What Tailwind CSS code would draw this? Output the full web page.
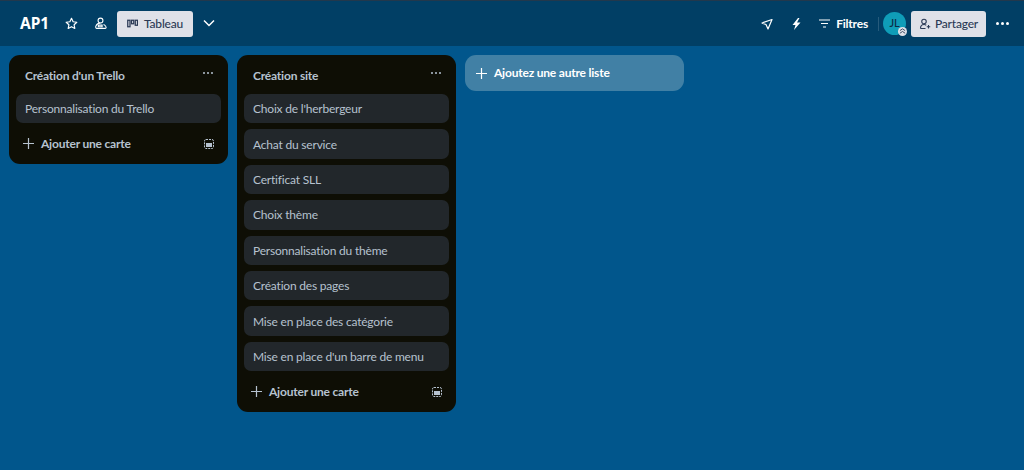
<!doctype html>
<html lang="fr"><head><meta charset="utf-8"><title>AP1</title>
<script src="https://cdn.jsdelivr.net/npm/@tailwindcss/browser@4"></script></head>
<body class="m-0">
<div class="w-[1024px] h-[470px] overflow-hidden flex flex-col bg-[#01568c] font-['Lato',sans-serif] text-[12px] tracking-[-0.2px]">
  <header class="h-[46px] shrink-0 bg-[#013f65] border-t border-[#22384c] flex items-center text-white">
    <span class="ml-[20px] text-[15.500px] font-bold w-[27px] tracking-normal font-['Noto_Sans',sans-serif]">AP1</span>
    <svg class="ml-[18px]" width="13" height="13" viewBox="0 0 24 24" fill="none" stroke="#fff" stroke-width="2.200" stroke-linejoin="round"><path d="M12 2.500l3 6.300 6.800.9-5 4.700 1.300 6.800-6.100-3.300-6.100 3.300 1.300-6.800-5-4.700 6.800-.9z"/></svg>
    <svg class="ml-[16px]" width="13" height="13" viewBox="0 0 24 24" fill="none" stroke="#fff" stroke-width="2"><circle cx="12" cy="6.500" r="4.500"/><path d="M4 21h17c1.500 0 2-2 .5-4-1-1.500-2.500-2.500-4-3M12 11c-4 0-7 2-8.500 5.500-1 2 0 4.500 1.500 4.500M8 15h7v3H8z"/></svg>
    <div class="ml-[10px] w-[76px] h-[26px] rounded-[3px] bg-[#dfe1e8] flex items-center justify-center gap-[6px] text-[#2b3a55] font-medium">
      <svg width="11" height="9" viewBox="0 0 22 16" fill="none" stroke="#2b3a55" stroke-width="2.500"><rect x="1.500" y="1.500" width="4.500" height="13"/><rect x="9" y="1.500" width="4.500" height="7"/><rect x="16.500" y="1.500" width="4.500" height="10"/></svg>
      <span class="pt-[1px]">Tableau</span>
    </div>
    <svg class="ml-[9px]" width="14" height="9" viewBox="0 0 14 9" fill="none" stroke="#fff" stroke-width="1.500"><path d="M2 1.500l5 5 5-5"/></svg>
    <div class="ml-auto flex items-center">
      <svg width="12" height="12" viewBox="0 0 24 24" fill="none" stroke="#fff" stroke-width="2.400" stroke-linejoin="round"><path d="M22 3L2 10l8 3 4 9z"/></svg>
      <svg class="ml-[18px]" width="11" height="12" viewBox="0 0 20 24" fill="#fff"><path d="M13 0L2 14h6l-3 10 13-15h-7l5-9z"/></svg>
      <svg class="ml-[17px]" width="11" height="9" viewBox="0 0 11 9" fill="none" stroke="#fff" stroke-width="1.200"><path d="M0 1h11M2 4.500h7M4 8h3"/></svg>
      <span class="ml-[6px] pt-[1px] font-bold">Filtres</span>
      <div class="ml-[10px] w-px h-[14px] bg-white/15"></div>
      <div class="relative ml-[4px] w-[23px] h-[23px] rounded-full bg-[#0f9db8] flex items-center justify-center text-[11px] font-medium text-[#0b2a44]">JL
        <div class="absolute right-[-1px] bottom-[-1px] w-[9px] h-[9px] rounded-full bg-[#dfe1e8] flex items-center justify-center"><svg width="7" height="7" viewBox="0 0 8 8" fill="none" stroke="#2b3a55" stroke-width="1"><path d="M1 3l3-2 3 2M1 6l3-2 3 2"/></svg></div>
      </div>
      <div class="ml-[5px] w-[75px] h-[26px] rounded-[3px] bg-[#dfe1e8] flex items-center justify-center gap-[4px] text-[#2b3a55] font-medium">
        <svg width="12" height="12" viewBox="0 0 24 24" fill="none" stroke="#2b3a55" stroke-width="2.200"><circle cx="10" cy="7" r="4.500"/><path d="M3 21c0-5 3-8 7-8 2 0 3.500.6 4.500 1.500M3 21h10M19 14v7M15.500 17.500h7"/></svg>
        <span class="pt-[1px]">Partager</span>
      </div>
      <div class="ml-[10px] mr-[15px] flex gap-[2px]"><i class="block w-[3px] h-[3px] rounded-full bg-white"></i><i class="block w-[3px] h-[3px] rounded-full bg-white"></i><i class="block w-[3px] h-[3px] rounded-full bg-white"></i></div>
    </div>
  </header>
  <main class="flex items-start gap-[9px] pl-[9px] pt-[9px]">
    <section class="w-[219px] rounded-[11px] bg-[#0e0e05] px-[7px] text-[#b6c2cf]">
      <div class="h-[39px] flex items-center justify-between pl-[9px] pr-[7px] font-bold"><span class="pt-[2px]">Création d'un Trello</span><div class="mb-[3px] mr-[1px] flex gap-[1.500px]"><i class="block w-[2.500px] h-[2.500px] rounded-full bg-[#b6c2cf]"></i><i class="block w-[2.500px] h-[2.500px] rounded-full bg-[#b6c2cf]"></i><i class="block w-[2.500px] h-[2.500px] rounded-full bg-[#b6c2cf]"></i></div></div>
      <div class="flex flex-col gap-[6px]">
        <div class="h-[29.400px] rounded-[7px] bg-[#22272b] pl-[9px] pt-[1px] flex items-center">Personnalisation du Trello</div>
      </div>
      <div class="h-[41px] flex items-center pl-[7px] pr-[7px] font-bold"><svg width="11" height="11" viewBox="0 0 11 11" stroke="#b6c2cf" stroke-width="1.200"><path d="M5.500 0v11M0 5.500h11"/></svg><span class="ml-[7px] pt-[1px]">Ajouter une carte</span><svg class="ml-auto" width="10" height="10" viewBox="0 0 10 10" fill="none"><rect x=".5" y=".5" width="9" height="9" rx="1.500" stroke="#b6c2cf" stroke-dasharray="2 1"/><rect x="2" y="4" width="6" height="4" fill="#b6c2cf"/></svg></div>
    </section>
    <section class="w-[219px] rounded-[11px] bg-[#0e0e05] px-[7px] text-[#b6c2cf]">
      <div class="h-[39px] flex items-center justify-between pl-[9px] pr-[7px] font-bold"><span class="pt-[2px]">Création site</span><div class="mb-[3px] mr-[1px] flex gap-[1.500px]"><i class="block w-[2.500px] h-[2.500px] rounded-full bg-[#b6c2cf]"></i><i class="block w-[2.500px] h-[2.500px] rounded-full bg-[#b6c2cf]"></i><i class="block w-[2.500px] h-[2.500px] rounded-full bg-[#b6c2cf]"></i></div></div>
      <div class="flex flex-col gap-[6px]">
        <div class="h-[29.400px] rounded-[7px] bg-[#22272b] pl-[9px] pt-[1px] flex items-center">Choix de l'herbergeur</div>
        <div class="h-[29.400px] rounded-[7px] bg-[#22272b] pl-[9px] pt-[1px] flex items-center">Achat du service</div>
        <div class="h-[29.400px] rounded-[7px] bg-[#22272b] pl-[9px] pt-[1px] flex items-center">Certificat SLL</div>
        <div class="h-[29.400px] rounded-[7px] bg-[#22272b] pl-[9px] pt-[1px] flex items-center">Choix thème</div>
        <div class="h-[29.400px] rounded-[7px] bg-[#22272b] pl-[9px] pt-[1px] flex items-center">Personnalisation du thème</div>
        <div class="h-[29.400px] rounded-[7px] bg-[#22272b] pl-[9px] pt-[1px] flex items-center">Création des pages</div>
        <div class="h-[29.400px] rounded-[7px] bg-[#22272b] pl-[9px] pt-[1px] flex items-center">Mise en place des catégorie</div>
        <div class="h-[29.400px] rounded-[7px] bg-[#22272b] pl-[9px] pt-[1px] flex items-center">Mise en place d'un barre de menu</div>
      </div>
      <div class="h-[41px] flex items-center pl-[7px] pr-[7px] font-bold"><svg width="11" height="11" viewBox="0 0 11 11" stroke="#b6c2cf" stroke-width="1.200"><path d="M5.500 0v11M0 5.500h11"/></svg><span class="ml-[7px] pt-[1px]">Ajouter une carte</span><svg class="ml-auto" width="10" height="10" viewBox="0 0 10 10" fill="none"><rect x=".5" y=".5" width="9" height="9" rx="1.500" stroke="#b6c2cf" stroke-dasharray="2 1"/><rect x="2" y="4" width="6" height="4" fill="#b6c2cf"/></svg></div>
    </section>
    <div class="w-[219px] h-[36px] rounded-[11px] bg-[#4180a5] flex items-center pl-[11px] text-white font-bold"><svg width="11" height="11" viewBox="0 0 11 11" stroke="#fff" stroke-width="1.200"><path d="M5.500 0v11M0 5.500h11"/></svg><span class="ml-[7px]">Ajoutez une autre liste</span></div>
  </main>
</div>
</body></html>
